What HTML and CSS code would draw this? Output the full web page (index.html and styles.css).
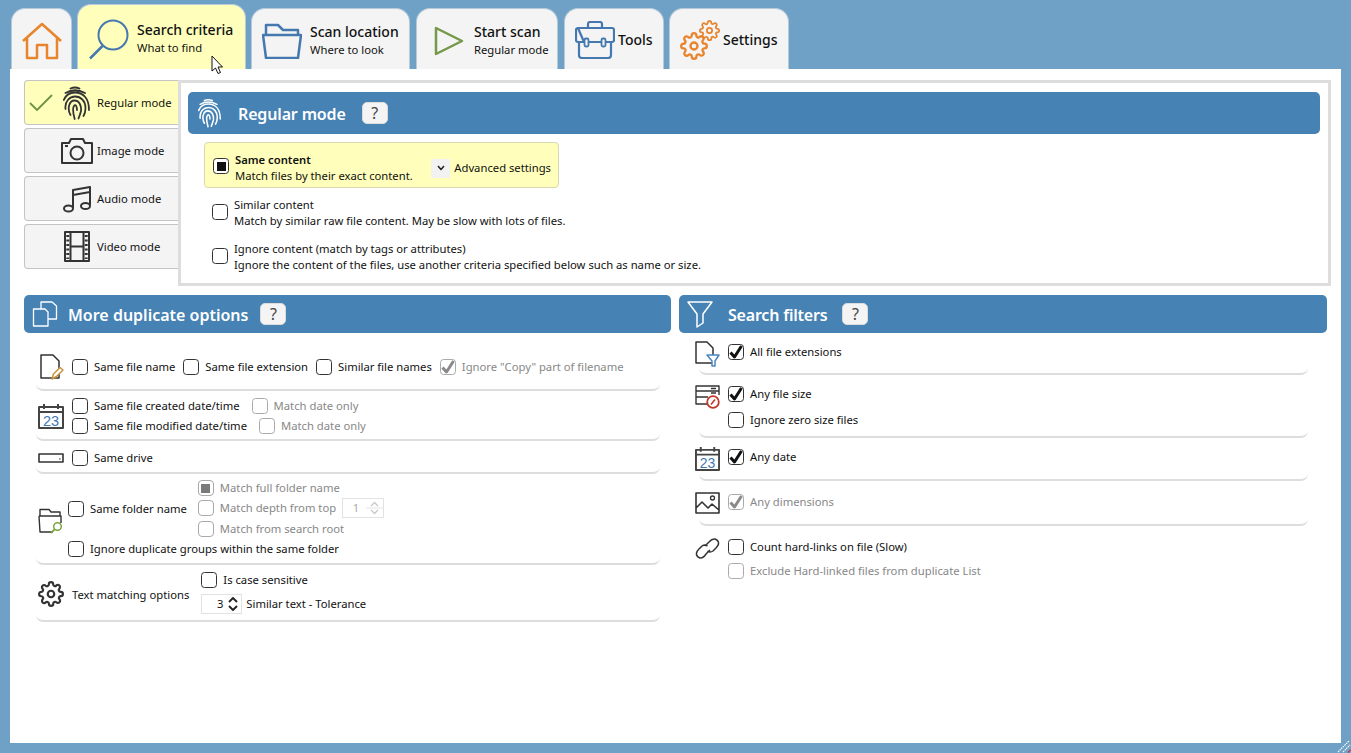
FILE: index.html
```html
<!DOCTYPE html>
<html lang="en">
<head>
<meta charset="utf-8">
<title>Search criteria</title>
<link rel="stylesheet" href="styles.css">
</head>
<body>
<svg class="defs" width="0" height="0" aria-hidden="true">
  <symbol id="gear" viewBox="0 0 24 24"><circle cx="12" cy="12" r="3"/><path d="M19.4 15a1.65 1.65 0 0 0 .33 1.82l.06.06a2 2 0 0 1 0 2.83 2 2 0 0 1-2.83 0l-.06-.06a1.65 1.65 0 0 0-1.82-.33 1.65 1.65 0 0 0-1 1.51V21a2 2 0 0 1-2 2 2 2 0 0 1-2-2v-.09A1.65 1.65 0 0 0 9 19.4a1.65 1.65 0 0 0-1.82.33l-.06.06a2 2 0 0 1-2.83 0 2 2 0 0 1 0-2.83l.06-.06a1.65 1.65 0 0 0 .33-1.82 1.65 1.65 0 0 0-1.51-1H3a2 2 0 0 1-2-2 2 2 0 0 1 2-2h.09A1.65 1.65 0 0 0 4.6 9a1.65 1.65 0 0 0-.33-1.82l-.06-.06a2 2 0 0 1 0-2.83 2 2 0 0 1 2.83 0l.06.06a1.65 1.65 0 0 0 1.82.33H9a1.65 1.65 0 0 0 1-1.51V3a2 2 0 0 1 2-2 2 2 0 0 1 2 2v.09a1.65 1.65 0 0 0 1 1.51 1.65 1.65 0 0 0 1.82-.33l.06-.06a2 2 0 0 1 2.83 0 2 2 0 0 1 0 2.83l-.06.06a1.65 1.65 0 0 0-.33 1.82V9a1.65 1.65 0 0 0 1.51 1H21a2 2 0 0 1 2 2 2 2 0 0 1-2 2h-.09a1.65 1.65 0 0 0-1.51 1z"/></symbol>
  <symbol id="finger" viewBox="0 0 28 34"><path d="M7.500 2.500Q12 .5 16.500 2.500M2.500 7Q12 1.500 22 7M.8 14C3 8.500 8 6.500 12 6.500C20 6.500 26 12 26 24M2.500 23C1.500 15 7 10.500 12 10.500C18 10.500 22.500 15 22.500 22C22.500 25 22 27.500 20.500 30M7.500 29C4 23 6 14.500 11.500 14.500C17 14.500 18.500 21 18 25C17.500 27.500 16.500 30 15.500 32.500M11.700 33C10 27 9.500 22 11 19.800C12.500 18 14 20 14 24"/></symbol>
  <symbol id="cal" viewBox="0 0 26 26"><path d="M1 4H25V25H1ZM1 9H25M6 1V6M20 1V6" fill="none" stroke="#444" stroke-width="2"/></symbol>
  <symbol id="tick" viewBox="0 0 16 16"><path d="M2.500 8.500L6.500 13L13.500 2" fill="none" stroke="currentColor" stroke-width="3"/></symbol>
</svg>

<nav class="tabs">
  <div class="tab tab-home">
    <svg class="orange" width="40" height="38" viewBox="0 0 40 38"><path d="M1 19L20 2L39 19M5 15V36H15V23H25V36H35V15" fill="none" stroke-width="2.500"/></svg>
  </div>
  <div class="tab tab-search active">
    <svg class="blue" width="42" height="43" viewBox="0 0 42 43"><circle cx="24" cy="18" r="14.500" fill="none" stroke-width="2"/><path d="M13.500 29L1 41.500" stroke-width="2.500"/></svg>
    <div class="tabtext"><b>Search criteria</b><span>What to find</span></div>
  </div>
  <div class="tab tab-scan">
    <svg class="blue" width="40" height="36" viewBox="0 0 40 36"><path d="M4 12V2H16L21 7H36V12M1 12H39L36 35H4Z" fill="none" stroke-width="2.500"/></svg>
    <div class="tabtext"><b>Scan location</b><span>Where to look</span></div>
  </div>
  <div class="tab tab-start">
    <svg class="green" width="30" height="30" viewBox="0 0 30 30"><path d="M2 2V28L28 15Z" fill="none" stroke-width="2.500"/></svg>
    <div class="tabtext"><b>Start scan</b><span>Regular mode</span></div>
  </div>
  <div class="tab tab-tools">
    <svg class="blue" width="40" height="38" viewBox="0 0 40 38"><path d="M13 7V3Q13 1 15 1H25Q27 1 27 3V7M3 7H37Q39 7 39 9V19Q39 21 37 21H31M9 21H3Q1 21 1 19V9Q1 7 3 7ZM14 21H26M4 21V34Q4 37 7 37H33Q36 37 36 34V21" fill="none" stroke-width="2.200"/><rect x="9.500" y="17.500" width="4" height="8" rx="1.500" fill="#f4f4f4" stroke-width="1.800"/><rect x="26.500" y="17.500" width="4" height="8" rx="1.500" fill="#f4f4f4" stroke-width="1.800"/></svg>
    <b class="single">Tools</b>
  </div>
  <div class="tab tab-settings">
    <svg class="orange gears" width="40" height="40" viewBox="0 0 40 40"><use href="#gear" x="0" y="12" width="28" height="28"/><use href="#gear" x="19" y="0" width="21" height="21"/></svg>
    <b class="single">Settings</b>
  </div>
</nav>

<main class="panel">
  <section class="top">
    <div class="modes">
      <div class="mode selected">
        <svg class="modecheck" width="24" height="18" viewBox="0 0 24 18"><path d="M1 9L8 16L23 1" fill="none" stroke="#6f9448" stroke-width="1.800"/></svg>
        <span class="modeicon"><svg class="dark fp" width="28" height="34"><use href="#finger"/></svg></span>
        <span>Regular mode</span>
      </div>
      <div class="mode">
        <span class="modecheck"></span>
        <span class="modeicon"><svg class="dark" width="32" height="26" viewBox="0 0 32 26"><path d="M1 5H8L10 1H22L24 5H31V25H1Z" fill="none" stroke-width="2"/><circle cx="16" cy="15" r="6.500" fill="none" stroke-width="2"/><path d="M4 8H7" stroke-width="2"/></svg></span>
        <span>Image mode</span>
      </div>
      <div class="mode">
        <span class="modecheck"></span>
        <span class="modeicon"><svg class="dark" width="28" height="28" viewBox="0 0 28 28"><path d="M10 23V5L27 2V20M10 10L27 7" fill="none" stroke-width="2"/><ellipse cx="5.500" cy="23.500" rx="4.500" ry="3" fill="none" stroke-width="2"/><ellipse cx="22.500" cy="21" rx="4.500" ry="3" fill="none" stroke-width="2"/></svg></span>
        <span>Audio mode</span>
      </div>
      <div class="mode">
        <span class="modecheck"></span>
        <span class="modeicon"><svg class="dark" width="26" height="31" viewBox="0 0 26 31"><path d="M1 1H25V30H1ZM6.500 1V30M19.500 1V30M6.500 15.500H19.500" fill="none" stroke-width="2"/><path d="M3.800 4V28M22.200 4V28" stroke-width="3" stroke-dasharray="2 2.500"/></svg></span>
        <span>Video mode</span>
      </div>
    </div>
    <div class="modebox">
      <header class="band band-mode">
        <svg class="white fp-band" width="24" height="30"><use href="#finger"/></svg>
        <h2>Regular mode</h2>
        <span class="help">?</span>
      </header>
      <div class="choice choice-on">
        <span class="cb"><i class="dot"></i></span>
        <div class="choicetext"><strong>Same content</strong><span>Match files by their exact content.</span></div>
        <div class="advanced">
          <span class="chev"><svg width="8" height="6" viewBox="0 0 8 6"><path d="M1 1L4 4.500L7 1" fill="none" stroke="#222" stroke-width="1.500"/></svg></span>
          <span>Advanced settings</span>
        </div>
      </div>
      <div class="choice choice-2">
        <span class="cb"></span>
        <div class="choicetext"><span>Similar content</span><span>Match by similar raw file content. May be slow with lots of files.</span></div>
      </div>
      <div class="choice choice-3">
        <span class="cb"></span>
        <div class="choicetext"><span>Ignore content (match by tags or attributes)</span><span>Ignore the content of the files, use another criteria specified below such as name or size.</span></div>
      </div>
    </div>
  </section>

  <section class="lower">
    <div class="col">
      <header class="band band-low">
        <svg class="white" width="26" height="26" viewBox="0 0 26 26"><path d="M1.500 8H13L16 11V25H1.500ZM9 8V1H20L24.500 5V18H16" fill="none" stroke-width="1.300"/></svg>
        <h2 class="h-dup">More duplicate options</h2>
        <span class="help">?</span>
      </header>

      <div class="row lrow r1">
        <svg class="licon dark" width="26" height="26" viewBox="0 0 26 26"><path d="M3 1H15L21 7V24H3Z" fill="none" stroke-width="1.500"/><path d="M14 25L15.500 20L22 13.500L25 16L18.500 22.500Z" fill="#fff" stroke="#c8923c" stroke-width="1.500"/></svg>
        <label class="item"><span class="cb"></span>Same file name</label>
        <label class="item"><span class="cb"></span>Same file extension</label>
        <label class="item"><span class="cb"></span>Similar file names</label>
        <label class="item off"><span class="cb"><svg class="tick" width="16" height="16"><use href="#tick"/></svg></span>Ignore "Copy" part of filename</label>
      </div>

      <div class="row lrow r2">
        <svg class="licon" width="26" height="26" viewBox="0 0 26 26"><use href="#cal"/><text x="13" y="22.500" text-anchor="middle" class="caltext">23</text></svg>
        <div class="stack">
          <div class="line"><label class="item"><span class="cb"></span>Same file created date/time</label><label class="item off"><span class="cb"></span>Match date only</label></div>
          <div class="line"><label class="item"><span class="cb"></span>Same file modified date/time</label><label class="item off"><span class="cb"></span>Match date only</label></div>
        </div>
      </div>

      <div class="row lrow r3">
        <svg class="licon dark" width="26" height="10" viewBox="0 0 26 10"><path d="M1 1H25V9H1Z" fill="none" stroke-width="1.600"/><path d="M21 6H22.500" stroke-width="1.200"/></svg>
        <label class="item"><span class="cb"></span>Same drive</label>
      </div>

      <div class="row lrow r4">
        <svg class="licon dark ficon" width="26" height="26" viewBox="0 0 26 26"><path d="M2 8V1.500H11L13 4H22V8M1 8H23V15M15 24H2L1 8" fill="none" stroke-width="1.400"/><circle cx="19.500" cy="18.500" r="3.800" fill="none" stroke="#7aa53f" stroke-width="1.500"/><path d="M16.800 21.200L13 25" stroke="#7aa53f" stroke-width="1.800"/></svg>
        <div class="stack folderstack">
          <div class="foldertop">
            <label class="item"><span class="cb"></span>Same folder name</label>
            <div class="stack subs">
              <label class="item off"><span class="cb"><i class="dot"></i></span>Match full folder name</label>
              <div class="line"><label class="item off"><span class="cb"></span>Match depth from top</label>
                <span class="spin spin-off"><em>1</em><span class="spinbtns"><svg width="17" height="18" viewBox="0 0 17 18"><path d="M5 7L8.500 3.500L12 7M5 11L8.500 14.500L12 11" fill="none" stroke="#c8c8c8" stroke-width="1.300"/><path d="M0 9H17" stroke="#e4e4e4"/></svg></span></span>
              </div>
              <label class="item off rootline"><span class="cb"></span>Match from search root</label>
            </div>
          </div>
          <label class="item"><span class="cb"></span>Ignore duplicate groups within the same folder</label>
        </div>
      </div>

      <div class="row lrow r5">
        <svg class="licon dark gear1" width="26" height="26"><use href="#gear"/></svg>
        <span class="textopts">Text matching options</span>
        <div class="stack textstack">
          <label class="item"><span class="cb"></span>Is case sensitive</label>
          <div class="line"><span class="spin spin-on"><em>3</em><span class="spinbtns"><svg width="16" height="18" viewBox="0 0 16 18"><path d="M4 7L8 3L12 7M4 11L8 15L12 11" fill="none" stroke="#222" stroke-width="1.800"/></svg></span></span><span class="spinlbl">Similar text - Tolerance</span></div>
        </div>
      </div>
    </div>

    <div class="col">
      <header class="band band-low">
        <svg class="white" width="26" height="27" viewBox="0 0 26 27"><path d="M1 1H25L16 13V22L10 26V13Z" fill="none" stroke-width="1.500"/></svg>
        <h2 class="h-filter">Search filters</h2>
        <span class="help">?</span>
      </header>

      <div class="row rrow f1">
        <svg class="ricon dark" width="25" height="26" viewBox="0 0 25 26"><path d="M1 1H12L18 7V22H1Z" fill="none" stroke-width="1.500"/><path d="M12 14H24L20 20V25H17V20Z" fill="#fff" stroke="#4a86c0" stroke-width="1.500"/></svg>
        <label class="item"><span class="cb"><svg class="tick" width="16" height="16"><use href="#tick"/></svg></span>All file extensions</label>
      </div>

      <div class="row rrow f2">
        <svg class="ricon dark" width="25" height="24" viewBox="0 0 25 24"><path d="M1 1H24V6H1ZM1 6H24V10M1 6V19H12M1 12H13" fill="none" stroke-width="1.400"/><path d="M16 3.500H21M16 8H21" stroke-width="1.400"/><circle cx="18" cy="17" r="5.800" fill="#fff" stroke="#c0392b" stroke-width="1.800"/><path d="M16 19.500L20 14.500" stroke="#c0392b" stroke-width="1.600"/></svg>
        <div class="stack gap6">
          <label class="item"><span class="cb"><svg class="tick" width="16" height="16"><use href="#tick"/></svg></span>Any file size</label>
          <label class="item"><span class="cb"></span>Ignore zero size files</label>
        </div>
      </div>

      <div class="row rrow f3">
        <svg class="ricon" width="25" height="25" viewBox="0 0 26 26"><use href="#cal"/><text x="13" y="22.500" text-anchor="middle" class="caltext">23</text></svg>
        <label class="item"><span class="cb"><svg class="tick" width="16" height="16"><use href="#tick"/></svg></span>Any date</label>
      </div>

      <div class="row rrow f4">
        <svg class="ricon dark" width="25" height="22" viewBox="0 0 25 22"><path d="M1 1H24V21H1ZM1 16L7 10L13 16L17 12L24 18" fill="none" stroke-width="1.600"/><circle cx="17.500" cy="6" r="2" fill="none" stroke-width="1.300"/></svg>
        <label class="item off"><span class="cb"><svg class="tick" width="16" height="16"><use href="#tick"/></svg></span>Any dimensions</label>
      </div>

      <div class="row rrow f5">
        <svg class="ricon dark" width="25" height="23" viewBox="0 0 25 23"><path d="M10 9L14 5Q17 1.500 20 2Q24 3.500 23.500 7Q23 9 21 11L18 14Q15 16 12.500 14M15 13L11 17Q8 21.500 5 21Q1 19.500 1.500 16Q2 14 4 12L7 9Q10 7 12.500 9" fill="none" stroke-width="1.500"/></svg>
        <div class="stack gap4">
          <label class="item"><span class="cb"></span>Count hard-links on file (Slow)</label>
          <label class="item off"><span class="cb"></span>Exclude Hard-linked files from duplicate List</label>
        </div>
      </div>
    </div>
  </section>
</main>

<svg class="cursor" width="13" height="20" viewBox="0 0 13 20"><path d="M1 1V16L4.500 13L7 18.500L9.500 17.500L7 12H11.500Z" fill="#fff" stroke="#111"/></svg>
<svg class="grip" width="14" height="14" viewBox="0 0 14 14"><path d="M1 13L12 2M6 13L13 6" stroke="#fff" stroke-width="1.200" stroke-dasharray="1.500 .8"/><path d="M11 13.500L13.500 11" stroke="#c2335a" stroke-width="1.200"/></svg>
</body>
</html>
```

FILE: styles.css
```css
* { box-sizing: border-box; }
html, body { margin: 0; height: 100%; }
body {
  position: relative;
  height: 753px;
  overflow: hidden;
  background: #6ea1c5;
  font-family: "Noto Sans", "Open Sans", sans-serif;
  font-size: 11.25px;
  line-height: 16px;
  color: #111;
}
.defs { position: absolute; }
svg { display: block; flex: none; stroke-linejoin: round; }
.orange { stroke: #e8842c; }
.blue { stroke: #4478ae; }
.green { stroke: #76984a; }
.dark { stroke: #333; }
.white { stroke: #fff; }
.fp, .fp-band { fill: none; stroke-width: 1.800; stroke-linecap: round; }
.gears, .gear1 { fill: none; stroke-width: 2; }
.caltext { font-family: "Liberation Sans", sans-serif; font-size: 14.500px; fill: #3f78b4; stroke: none; }

/* Tabs */
.tabs { display: flex; align-items: flex-end; gap: 5px; height: 69px; padding-left: 11px; }
.tab {
  display: flex;
  align-items: center;
  height: 61px;
  padding-top: 3px;
  background: #f4f4f4;
  border: 1px solid #b6cad9;
  border-bottom: 0;
  border-radius: 14px 14px 0 0;
}
.tab.active { height: 65px; background: #ffffbb; }
.tab b { font-weight: 500; }
.tabtext { display: flex; flex-direction: column; }
.tabtext b { font-size: 14px; line-height: 18px; }
.tabtext span { font-size: 11.25px; line-height: 18px; }
.single { font-size: 14px; }
.tab-home { width: 61px; padding-left: 10px; }
.tab-search { width: 169px; padding-left: 11px; gap: 6px; }
.tab-scan { width: 159px; padding-left: 10px; gap: 8px; }
.tab-start { width: 142px; padding-left: 17px; gap: 10px; margin-left: 1px; }
.tab-tools { width: 100px; padding: 1px 0 0 10px; gap: 3px; margin-left: 1px; }
.tab-settings { width: 120px; padding: 1px 0 0 10px; gap: 3px; }

/* Panel */
.panel { height: 674px; margin: 0 10px; background: #fff; padding: 11px 10px 0 14px; }
.top { display: flex; }
.modes { width: 154px; display: flex; flex-direction: column; gap: 3px; }
.mode {
  display: flex;
  align-items: center;
  height: 45px;
  padding-left: 4px;
  background: #f4f4f4;
  border: 1px solid #c4c4c4;
  border-right: 0;
  border-radius: 4px 0 0 4px;
}
.mode.selected { background: #ffffbb; }
.modecheck { width: 24px; margin-right: 7px; }
.modeicon { display: flex; justify-content: center; width: 34px; margin-right: 3px; }

.modebox { flex: 1; height: 206px; border: 3px solid #ddd; padding: 9px 8px 0 7px; }

.band { display: flex; align-items: center; background: #4682b4; border-radius: 5px; color: #fff; }
.band h2 { margin: 0; font-size: 16px; font-weight: 600; line-height: 20px; padding-top: 2px; }
.band-mode { height: 42px; padding-left: 10px; }
.band-mode h2 { margin: 0 16px 0 16px; letter-spacing: -0.15px; }
.band-low { height: 38px; padding-left: 8px; margin-bottom: 1px; }
.h-dup { margin: 0 12px 0 10px !important; }
.h-filter { margin: 0 15px 0 15px !important; letter-spacing: -0.2px; }
.help {
  width: 26px;
  height: 22px;
  background: #f4f4f4;
  border: 1px solid #dcdcdc;
  border-radius: 5px;
  color: #444;
  font-size: 16px;
  line-height: 20px;
  text-align: center;
  font-weight: 400;
}

.cb {
  display: flex;
  align-items: center;
  justify-content: center;
  flex: none;
  width: 16px;
  height: 16px;
  background: #fff;
  border: 1.500px solid #333;
  border-radius: 3.500px;
  color: #111;
}
.dot { display: block; width: 9px; height: 9px; background: #111; }
.tick { margin: -2px; }

.choice { display: flex; align-items: center; }
.choice .cb { margin-right: 6px; margin-top: -2px; }
.choicetext { display: flex; flex-direction: column; }
.choicetext strong { font-weight: 600; }
.choice-on {
  width: 355px;
  height: 46px;
  margin: 8px 0 0 16px;
  padding: 6px 7px 0 8px;
  background: #ffffbb;
  border: 1px solid #d8d8b0;
  border-radius: 4px;
}
.choice-on .cb { margin-top: -4px; }
.advanced { display: flex; align-items: center; gap: 4px; margin-left: auto; }
.chev { display: flex; align-items: center; justify-content: center; width: 19px; height: 19px; background: #f2f2f2; }
.choice-2 { margin: 9px 0 0 24px; }
.choice-3 { margin: 12px 0 0 24px; }

/* Lower columns */
.lower { display: grid; grid-template-columns: 647px 648px; gap: 8px; margin-top: 9px; }
.row { display: flex; align-items: center; border-bottom: 2px solid #ddd; border-radius: 0 0 7px 7px; }
.lrow { margin-left: 12px; width: 624px; padding-left: 2px; }
.rrow { margin-left: 20px; width: 609px; align-items: flex-start; }
.licon { margin-right: 8px; }
.ricon { margin: 0 8px 0 -4px; }
.item { display: flex; align-items: center; gap: 6px; height: 20px; white-space: nowrap; }
.off { color: #888; }
.off .cb { border-color: #aaa; color: #8a8a8a; }
.off .dot { background: #7a7a7a; }
.stack { display: flex; flex-direction: column; }
.line { display: flex; align-items: center; height: 20px; gap: 12px; }
.r1 { padding-top: 20px; padding-bottom: 9px; gap: 8px; }
.r1 .licon { margin-right: 0; }
.r2 { padding-top: 5px; padding-bottom: 3px; }
.r3 { padding-top: 7px; padding-bottom: 4px; }
.r4 { padding-top: 4px; padding-bottom: 4px; }
.ficon { margin-right: 4px; margin-top: 4px; }
.foldertop { display: flex; align-items: center; gap: 11px; }
.subs .cb { border-radius: 4px; }
.subs .line { gap: 6px; }
.rootline { margin-top: 1px; }
.r5 { padding-top: 5px; padding-bottom: 6px; }
.gear1 { margin-top: 4px; }
.textopts { margin: 5px 12px 0 0; }
.textstack { gap: 4px; }
.spin { display: flex; align-items: center; justify-content: flex-end; border: 1px solid #e2e2e2; }
.spin em { font-style: normal; }
.spin-off { width: 42px; height: 20px; color: #aaa; }
.spin-off em { margin-right: 7px; }
.spin-on { width: 41px; height: 20px; }
.spin-on em { margin-right: 2px; }
.spinlbl { margin-left: -8px; }
.f1 { padding-top: 7px; padding-bottom: 6px; height: 41px; }
.f1 .item { margin-top: 1px; }
.f2 { padding-top: 9px; padding-bottom: 6px; height: 63px; }
.f2 .ricon { margin-top: 1px; }
.gap6 { gap: 6px; }
.f3 { padding-top: 8px; height: 43px; }
.f3 .item { margin-top: 1px; }
.f4 { padding-top: 11px; height: 45px; }
.f5 { padding-top: 11px; border-bottom: 0; }
.f5 .ricon { margin-top: 0; }
.gap4 { gap: 4px; }

/* Overlays */
.cursor { position: absolute; left: 211px; top: 55px; }
.grip { position: absolute; right: 0; bottom: 0; }
```
